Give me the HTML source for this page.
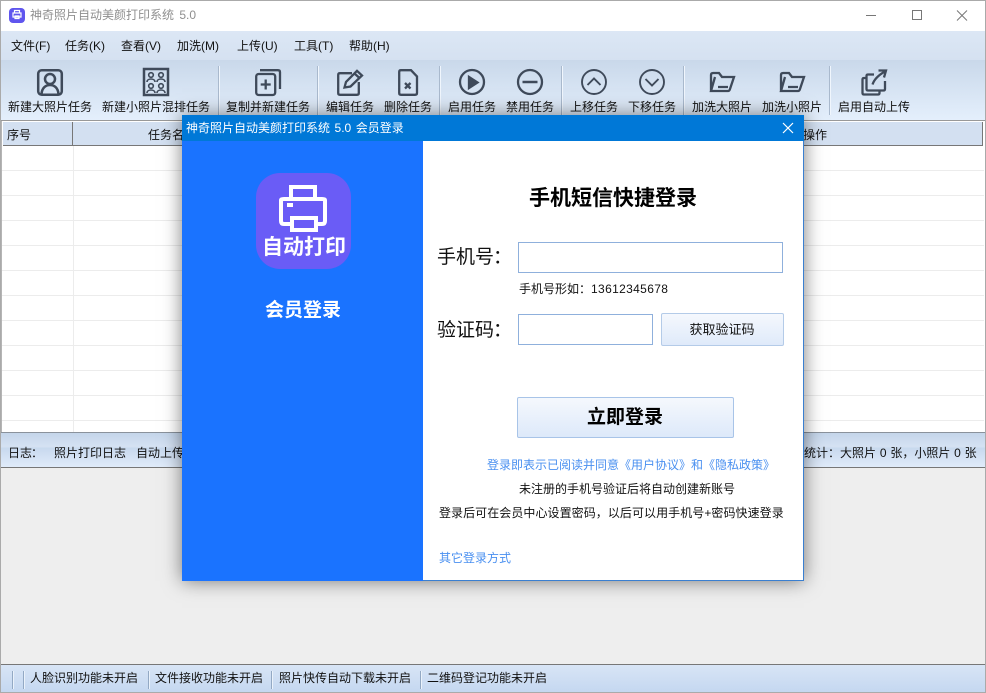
<!DOCTYPE html>
<html lang="zh"><head><meta charset="utf-8"><style>
html,body{margin:0;padding:0;width:986px;height:693px;overflow:hidden;background:#fff}
body{position:relative;font-family:"Liberation Sans","Noto Sans CJK SC",sans-serif;font-size:12px;color:#111}
.a,.t{position:absolute}
.t{white-space:nowrap;line-height:16px;font-size:12px}
.c{transform:translateX(-50%)}
.k{position:relative}
svg{position:absolute;overflow:visible;fill:none;stroke:#3f4a5a;stroke-width:2.3}
.sep{position:absolute;top:66px;width:1px;height:49px;background:#a9b9cd;border-right:1px solid #f0f6fd}
.hl{position:absolute;left:2px;width:982px;height:1px;background:#ececec}
.ss{position:absolute;top:671px;width:1px;height:18px;background:#93a9c4;border-right:1px solid #eaf2fb}
</style></head><body>
<div class="a" style="left:0;top:0;width:986px;height:1px;background:#aaa"></div>
<div class="a" style="left:0;top:0;width:1px;height:693px;background:#aaa"></div>
<div class="a" style="right:0;top:0;width:1px;height:693px;background:#aaa"></div>
<!-- title -->
<div class="a" style="left:9px;top:8px;width:16px;height:15px;border-radius:4px;background:#5f55ee"></div>
<svg style="left:12px;top:10px;stroke:#fff;stroke-width:1.200" width="10" height="10"><path d="M2.500 3V.5H7.500V3M1 3H9V7H1ZM3 6H7V8.500H3Z"/></svg>
<div class="t" style="left:30px;top:7px;font-size:12px;color:#8f8f8f;word-spacing:2px">神奇照片自动美颜打印系统 5.0</div>
<svg style="left:866px;top:8px;stroke:#777;stroke-width:1" width="112" height="16"><path d="M0 7.500H10M46.500 2.500H55.500V11.500H46.500ZM91 2.500L101 12.500M101 2.500L91 12.500"/></svg>
<!-- menu -->
<div class="a" style="left:1px;top:31px;width:984px;height:29px;background:linear-gradient(#dce7f5,#d5e1f1)"></div>
<div class="t" style="left:11px;top:38px">文件(F)</div><div class="t" style="left:65px;top:38px">任务(K)</div><div class="t" style="left:121px;top:38px">查看(V)</div><div class="t" style="left:177px;top:38px">加洗(M)</div><div class="t" style="left:237px;top:38px">上传(U)</div><div class="t" style="left:294px;top:38px">工具(T)</div><div class="t" style="left:349px;top:38px">帮助(H)</div>
<!-- toolbar -->
<div class="a" style="left:1px;top:60px;width:984px;height:60px;background:linear-gradient(#c9d8ea,#e4effc)"></div>
<div class="sep" style="left:218px"></div><div class="sep" style="left:317px"></div><div class="sep" style="left:439px"></div><div class="sep" style="left:561px"></div><div class="sep" style="left:683px"></div><div class="sep" style="left:829px"></div>
<svg style="left:37px;top:69px;stroke-width:2.500" width="26" height="27"><rect x="1.200" y="1.200" width="23.600" height="24.600" rx="3.500"/><circle cx="13" cy="10" r="5"/><path d="M4.500 25C5 18.500 9 16 13 16S21 18.500 21.500 25"/></svg>
<svg style="left:143px;top:68px;stroke-width:1.600" width="26" height="28"><rect x="1" y="1" width="24" height="26" stroke-width="2.500"/><circle cx="8" cy="7" r="2.300"/><circle cx="18" cy="7" r="2.300"/><circle cx="8" cy="18" r="2.300"/><circle cx="18" cy="18" r="2.300"/><path d="M4 14C4 10 12 10 12 14M14 14C14 10 22 10 22 14M4 25C4 21 12 21 12 25M14 25C14 21 22 21 22 25"/></svg>
<svg style="left:255px;top:69px" width="26" height="27"><rect x="1.200" y="5" width="19" height="21" rx="2.500"/><path d="M5 1.200H23Q25 1.200 25 3.200V20M10.700 10.500V20.500M5.700 15.500H15.700"/></svg>
<svg style="left:337px;top:69px" width="26" height="27"><path d="M15 4.200H3Q1.200 4.200 1.200 6V24Q1.200 25.800 3 25.800H20Q21.800 25.800 21.800 24V13"/><path d="M7.500 18.500L9 13L20 1.800L25 6.500L13.500 17.500ZM17.500 4.500L22.500 9"/></svg>
<svg style="left:398px;top:69px" width="20" height="27"><path d="M3 1.200H13L19 7.500V24Q19 25.800 17 25.800H3Q1.200 25.800 1.200 24V3Q1.200 1.200 3 1.200ZM7 14L12.500 19.500M12.500 14L7 19.500"/></svg>
<svg style="left:459px;top:69px" width="26" height="26"><circle cx="13" cy="13" r="12"/><path d="M10 8L18.500 13.500L10 19Z" fill="#3f4a5a"/></svg>
<svg style="left:517px;top:69px" width="26" height="26"><circle cx="13" cy="13" r="12"/><path d="M5.500 13H20.500" stroke-width="2.500"/></svg>
<svg style="left:581px;top:69px;stroke-width:1.900" width="26" height="26"><circle cx="13" cy="13" r="12"/><path d="M6.500 16L13 9.500L19.500 16"/></svg>
<svg style="left:639px;top:69px;stroke-width:1.900" width="26" height="26"><circle cx="13" cy="13" r="12"/><path d="M6.500 10L13 16.500L19.500 10"/></svg>
<svg style="left:709px;top:71px" width="26" height="22"><path d="M2 20V4Q2 2 4 2H10L13 6H25L21 18Q20.500 20 19 20H2L6 6M9 16H19"/></svg>
<svg style="left:779px;top:71px" width="26" height="22"><path d="M2 20V4Q2 2 4 2H10L13 6H25L21 18Q20.500 20 19 20H2L6 6M9 16H19"/></svg>
<svg style="left:861px;top:69px" width="26" height="27"><path d="M5 9H3Q1.500 9 1.500 10.500V24Q1.500 25.500 3 25.500H17Q18.500 25.500 18.500 24V21.500"/><path d="M13 5.500H7Q5.500 5.500 5.500 7V20Q5.500 21.500 7 21.500H22.500Q24 21.500 24 20V12M11.500 15.500Q14 8 24 2.500M17.500 1.500L25 1.500L23 8.500"/></svg>
<div class="t" style="left:8px;top:99px">新建大照片任务</div><div class="t" style="left:102px;top:99px">新建小照片混排任务</div><div class="t" style="left:226px;top:99px">复制并新建任务</div><div class="t" style="left:326px;top:99px">编辑任务</div><div class="t" style="left:384px;top:99px">删除任务</div><div class="t" style="left:448px;top:99px">启用任务</div><div class="t" style="left:506px;top:99px">禁用任务</div><div class="t" style="left:570px;top:99px">上移任务</div><div class="t" style="left:628px;top:99px">下移任务</div><div class="t" style="left:692px;top:99px">加洗大照片</div><div class="t" style="left:762px;top:99px">加洗小照片</div><div class="t" style="left:838px;top:99px">启用自动上传</div>
<!-- table -->
<div class="a" style="left:1px;top:120px;width:984px;height:1px;background:#999"></div>
<div class="a" style="left:1px;top:121px;width:1px;height:311px;background:#b5b5b5"></div>
<div class="a" style="left:3px;top:122px;width:979px;height:23px;background:#d3e0f1;border-bottom:1px solid #777;border-right:1px solid #777"></div>
<div class="a" style="left:72px;top:122px;width:1px;height:24px;background:#777"></div>
<div class="t" style="left:7px;top:127px">序号</div><div class="t" style="left:148px;top:127px">任务名</div><div class="t" style="left:803px;top:127px">操作</div>
<div class="hl" style="top:170px"></div><div class="hl" style="top:195px"></div><div class="hl" style="top:220px"></div><div class="hl" style="top:245px"></div><div class="hl" style="top:270px"></div><div class="hl" style="top:295px"></div><div class="hl" style="top:320px"></div><div class="hl" style="top:345px"></div><div class="hl" style="top:370px"></div><div class="hl" style="top:395px"></div><div class="hl" style="top:420px"></div>
<div class="a" style="left:73px;top:146px;width:1px;height:286px;background:#ececec"></div>
<div class="a" style="left:1px;top:432px;width:984px;height:1px;background:#8a929c"></div>
<!-- log bar -->
<div class="a" style="left:1px;top:433px;width:984px;height:34px;background:linear-gradient(#c4d5ea 0,#d5e2f3 40%,#c8d9ee 45%,#e0ebfa 100%)"></div>
<div class="t" style="left:8px;top:445px">日志<span class="k" style="left:-1px">：</span></div><div class="t" style="left:54px;top:445px">照片打印日志</div><div class="t" style="left:136px;top:445px">自动上传</div>
<div class="t" style="left:804px;top:445px;word-spacing:.5px">统计：大照片 0 张，小照片 0 张</div>
<div class="a" style="left:1px;top:467px;width:984px;height:198px;background:#eee;border-top:1px solid #777;border-bottom:1px solid #777;box-sizing:border-box"></div>
<!-- status -->
<div class="a" style="left:1px;top:665px;width:984px;height:28px;background:linear-gradient(#d8e5f6,#c4d7f0)"></div>
<div class="ss" style="left:12px"></div><div class="ss" style="left:23px"></div><div class="ss" style="left:148px"></div><div class="ss" style="left:271px"></div><div class="ss" style="left:420px"></div>
<div class="t" style="left:30px;top:670px">人脸识别功能未开启</div><div class="t" style="left:155px;top:670px">文件接收功能未开启</div><div class="t" style="left:279px;top:670px">照片快传自动下载未开启</div><div class="t" style="left:427px;top:670px">二维码登记功能未开启</div>
<div class="a" style="left:0;top:692px;width:986px;height:1px;background:#aaa"></div>
<!-- dialog -->
<div class="a" style="left:182px;top:115px;width:621px;height:465px;background:#fff;border-right:1px solid #3a7fd0;border-bottom:1px solid #3a7fd0;box-shadow:0 0 18px rgba(0,0,0,.5)"></div>
<div class="a" style="left:182px;top:115px;width:622px;height:26px;background:#0078d7"></div>
<div class="t" style="left:186px;top:120px;color:#fff;word-spacing:1.200px">神奇照片自动美颜打印系统 5.0 会员登录</div>
<svg style="left:783px;top:123px;stroke:#fff;stroke-width:1.200" width="10" height="10"><path d="M0 0L10 10M10 0L0 10"/></svg>
<div class="a" style="left:182px;top:141px;width:241px;height:440px;background:#1a73ff"></div>
<div class="a" style="left:256px;top:173px;width:95px;height:96px;border-radius:24px;background:#6a5cf6"></div>
<svg style="left:279px;top:184px;stroke:#fff;stroke-width:4" width="50" height="50"><path d="M12 13V3H36V13M11 40H5Q2 40 2 37V16Q2 15 5 15H43Q46 15 46 16V37Q46 40 43 40H38"/><path d="M13 34H37V46H13Z"/><path d="M8 21H14" stroke-width="4"/></svg>
<div class="t" style="left:262px;top:234px;color:#fff;font-size:21px;line-height:28px;font-weight:700">自动打印</div>
<div class="t c" style="left:303px;top:298px;color:#fff;font-size:19px;line-height:26px;font-weight:700">会员登录</div>
<div class="t c" style="left:613px;top:185px;font-size:21px;line-height:28px;font-weight:700;color:#000">手机短信快捷登录</div>
<div class="t" style="left:437px;top:245px;font-size:19px;line-height:26px">手机号<span class="k" style="left:-1px">：</span></div>
<div class="a" style="left:518px;top:242px;width:263px;height:29px;border:1px solid #8fb0dc"></div>
<div class="t" style="left:519px;top:281px">手机号形如：<span style="letter-spacing:.35px">13612345678</span></div>
<div class="t" style="left:437px;top:318px;font-size:19px;line-height:26px">验证码<span class="k" style="left:-1px">：</span></div>
<div class="a" style="left:518px;top:314px;width:133px;height:29px;border:1px solid #8fb0dc"></div>
<div class="a" style="left:661px;top:313px;width:121px;height:31px;border:1px solid #b4cbe8;border-radius:2px;background:linear-gradient(#f5f8fd,#dfeafa)"></div>
<div class="t c" style="left:722px;top:322px;font-size:13px">获取验证码</div>
<div class="a" style="left:517px;top:397px;width:215px;height:39px;border:1px solid #a8c4e8;border-radius:2px;background:linear-gradient(#f5f8fd,#dde9fa)"></div>
<div class="t c" style="left:625px;top:404px;font-size:19px;line-height:28px;font-weight:700;color:#000">立即登录</div>
<div class="t" style="left:487px;top:457px;color:#4a90f0">登录即表示已阅读并同意《用户协议》和《隐私政策》</div>
<div class="t" style="left:519px;top:481px;color:#111">未注册的手机号验证后将自动创建新账号</div>
<div class="t" style="left:439px;top:505px;color:#111;letter-spacing:.06px">登录后可在会员中心设置密码，以后可以用手机号+密码快速登录</div>
<div class="t" style="left:439px;top:550px;color:#4a90f0">其它登录方式</div>
</body></html>
